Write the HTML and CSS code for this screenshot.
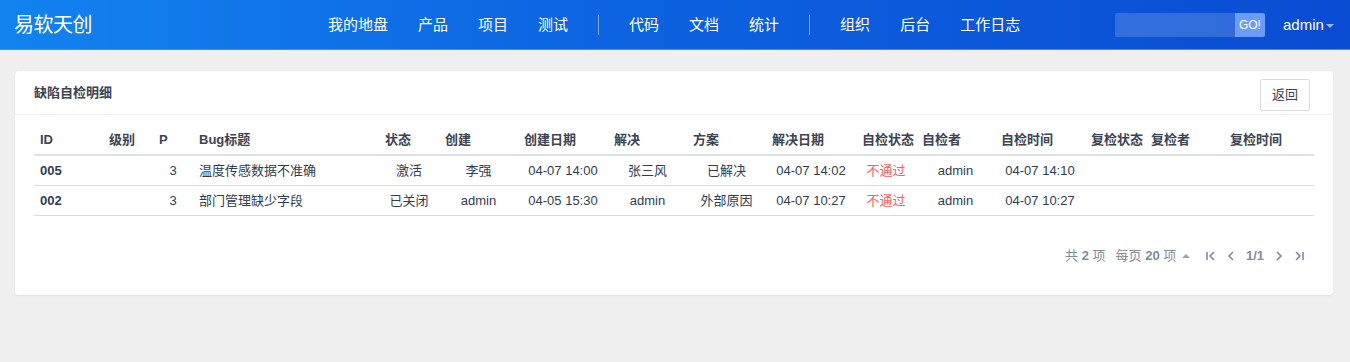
FILE: index.html
```html
<!DOCTYPE html>
<html lang="zh-CN">
<head>
<meta charset="utf-8">
<title>缺陷自检明细</title>
<link rel="stylesheet" href="styles.css">
</head>
<body>
  <div class="navbar">
    <div class="brand">易软天创</div>
    <ul class="nav">
      <li><a href="#">我的地盘</a></li>
      <li><a href="#">产品</a></li>
      <li><a href="#">项目</a></li>
      <li><a href="#">测试</a></li>
      <li class="divider"></li>
      <li><a href="#">代码</a></li>
      <li><a href="#">文档</a></li>
      <li><a href="#">统计</a></li>
      <li class="divider"></li>
      <li><a href="#">组织</a></li>
      <li><a href="#">后台</a></li>
      <li><a href="#">工作日志</a></li>
    </ul>
    <div class="search">
      <input type="text" class="search-input">
      <button class="search-btn">GO!</button>
    </div>
    <div class="user">admin <span class="caret"></span></div>
  </div>

  <div class="main">
    <div class="panel">
      <div class="panel-heading">
        <strong>缺陷自检明细</strong>
        <a href="#" class="btn">返回</a>
      </div>
      <div class="panel-body">
        <table class="table">
          <thead>
            <tr>
              <th class="c-id">ID</th>
              <th class="c-sev">级别</th>
              <th class="c-pri">P</th>
              <th class="c-title">Bug标题</th>
              <th class="c-status">状态</th>
              <th class="c-user">创建</th>
              <th class="c-date">创建日期</th>
              <th class="c-user">解决</th>
              <th class="c-user">方案</th>
              <th class="c-date">解决日期</th>
              <th class="c-status">自检状态</th>
              <th class="c-user">自检者</th>
              <th class="c-date">自检时间</th>
              <th class="c-status">复检状态</th>
              <th class="c-user">复检者</th>
              <th class="c-date">复检时间</th>
            </tr>
          </thead>
          <tbody>
            <tr>
              <td class="c-id">005</td>
              <td></td>
              <td class="center">3</td>
              <td>温度传感数据不准确</td>
              <td class="center">激活</td>
              <td class="center">李强</td>
              <td class="center">04-07 14:00</td>
              <td class="center">张三风</td>
              <td class="center">已解决</td>
              <td class="center">04-07 14:02</td>
              <td class="center fail">不通过</td>
              <td class="center">admin</td>
              <td class="center">04-07 14:10</td>
              <td></td>
              <td></td>
              <td></td>
            </tr>
            <tr>
              <td class="c-id">002</td>
              <td></td>
              <td class="center">3</td>
              <td>部门管理缺少字段</td>
              <td class="center">已关闭</td>
              <td class="center">admin</td>
              <td class="center">04-05 15:30</td>
              <td class="center">admin</td>
              <td class="center">外部原因</td>
              <td class="center">04-07 10:27</td>
              <td class="center fail">不通过</td>
              <td class="center">admin</td>
              <td class="center">04-07 10:27</td>
              <td></td>
              <td></td>
              <td></td>
            </tr>
          </tbody>
        </table>
        <div class="pager">
          <span>共 <b>2</b> 项</span>
          <span class="per-page">每页 <b>20</b> 项 <span class="caret-up"></span></span>
          <a class="pager-icon" href="#"><svg width="12" height="12" viewBox="0 0 12 12"><path d="M2 2v8M9 2L5 6l4 4" fill="none" stroke="currentColor" stroke-width="1.6"/></svg></a>
          <a class="pager-icon" href="#"><svg width="12" height="12" viewBox="0 0 12 12"><path d="M8 2L4 6l4 4" fill="none" stroke="currentColor" stroke-width="1.6"/></svg></a>
          <b class="page-num">1/1</b>
          <a class="pager-icon" href="#"><svg width="12" height="12" viewBox="0 0 12 12"><path d="M4 2l4 4-4 4" fill="none" stroke="currentColor" stroke-width="1.6"/></svg></a>
          <a class="pager-icon" href="#"><svg width="12" height="12" viewBox="0 0 12 12"><path d="M3 2l4 4-4 4M10 2v8" fill="none" stroke="currentColor" stroke-width="1.6"/></svg></a>
        </div>
      </div>
    </div>
  </div>
</body>
</html>
```

FILE: styles.css
```css
body {
  margin: 0;
  background: #efefef;
  font: 13px/18px "Liberation Sans", "Noto Sans CJK SC", sans-serif;
  color: #313c52;
}

a {
  text-decoration: none;
  color: inherit;
}

.navbar {
  display: flex;
  align-items: center;
  height: 49px;
  padding: 0 14px;
  background: linear-gradient(to right, #1283ef 0%, #0d63e0 45%, #0a4cd3 100%);
  border-bottom: 1px solid #3d8ef0;
  color: #fff;
}

.brand {
  font-size: 20px;
  width: 299px;
  letter-spacing: -0.5px;
}

.nav {
  display: flex;
  align-items: center;
  list-style: none;
  margin: 0;
  padding: 0;
  flex: 1;
}

.nav li a {
  display: block;
  padding: 0 15px;
  font-size: 15px;
  line-height: 49px;
}

.nav .divider {
  width: 1px;
  height: 20px;
  background: rgba(255, 255, 255, 0.45);
  margin: 0 15px 0 15px;
}

.search {
  display: flex;
  height: 24px;
  margin-right: 18px;
}

.search-input {
  width: 120px;
  border: 0;
  padding: 0;
  background: rgba(255, 255, 255, 0.16);
  border-radius: 2px 0 0 2px;
}

.search-btn {
  width: 30px;
  border: 0;
  padding: 0;
  background: #6b9cf9;
  color: #fff;
  font: 12px "Liberation Sans", sans-serif;
  border-radius: 0 2px 2px 0;
}

.user {
  font-size: 15px;
  margin-right: 2px;
}

.caret {
  display: inline-block;
  vertical-align: middle;
  border-top: 4px solid rgba(255, 255, 255, 0.6);
  border-left: 4px solid transparent;
  border-right: 4px solid transparent;
  margin-left: -2px;
}

.main {
  padding: 21px 17px 20px 15px;
}

.panel {
  background: #fff;
  border-radius: 4px;
  box-shadow: 0 1px 2px rgba(0, 0, 0, 0.06);
}

.panel-heading {
  display: flex;
  justify-content: space-between;
  align-items: center;
  height: 43px;
  padding: 0 23px 0 19px;
  border-bottom: 1px solid #f0f0f0;
  color: #3c4353;
}

.btn {
  display: inline-block;
  border: 1px solid #dcdcdc;
  border-radius: 2px;
  padding: 6px 11px;
  font-size: 13px;
  color: #3c4353;
  margin-top: 4px;
}

.panel-body {
  padding: 10px 19px 24px 19px;
}

.table {
  width: 1279px;
  border-collapse: collapse;
  table-layout: fixed;
}

.table th {
  text-align: left;
  font-weight: bold;
  color: #3c4353;
  height: 29px;
  padding: 0 6px;
  border-bottom: 2px solid #dde0e6;
  white-space: nowrap;
}

.table td {
  height: 29px;
  padding: 0 6px;
  border-bottom: 1px solid #d8dbe2;
  white-space: nowrap;
}

.c-id { width: 57px; }
.c-sev { width: 38px; }
.c-pri { width: 28px; }
.c-title { width: 174px; }
.c-status { width: 48px; }
.c-user { width: 67px; }
.c-date { width: 78px; }

td.c-id {
  font-weight: bold;
}

.center {
  text-align: center;
}

.fail {
  color: #ff5d5d;
}

.pager {
  display: flex;
  justify-content: flex-end;
  align-items: center;
  height: 30px;
  margin-top: 25px;
  padding-right: 5px;
  color: #838a9d;
}

.pager b {
  color: #838a9d;
}

.per-page {
  margin-left: 10px;
  margin-right: 11px;
}

.caret-up {
  display: inline-block;
  vertical-align: middle;
  border-bottom: 4px solid #9aa0b0;
  border-left: 4px solid transparent;
  border-right: 4px solid transparent;
  margin-left: 2px;
  margin-top: -2px;
}

.pager-icon {
  display: flex;
  align-items: center;
  margin: 0 4px;
  color: #838a9d;
}

.page-num {
  margin: 0 5px;
}
```
